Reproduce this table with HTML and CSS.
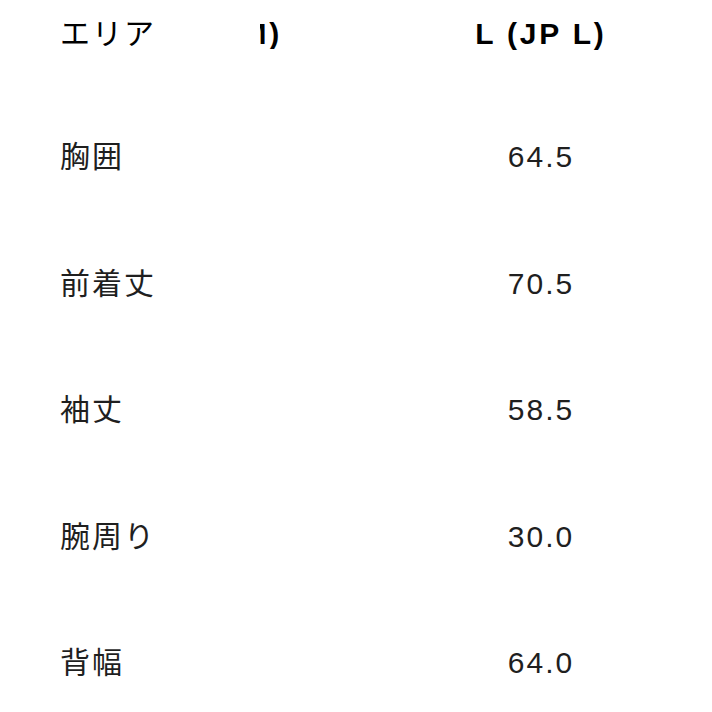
FILE: index.html
```html
<!DOCTYPE html>
<html lang="ja">
<head>
<meta charset="utf-8">
<title>サイズ表</title>
<link rel="stylesheet" href="styles.css">
</head>
<body>
<div class="table">
  <div class="row head">
    <div class="cell area">エリア</div>
    <div class="cell clip"><span>M)</span></div>
    <div class="cell val">L (JP L)</div>
  </div>
  <div class="body">
    <div class="row"><div class="cell area">胸囲</div><div class="cell clip"></div><div class="cell val">64.5</div></div>
    <div class="row"><div class="cell area">前着丈</div><div class="cell clip"></div><div class="cell val">70.5</div></div>
    <div class="row"><div class="cell area">袖丈</div><div class="cell clip"></div><div class="cell val">58.5</div></div>
    <div class="row"><div class="cell area">腕周り</div><div class="cell clip"></div><div class="cell val">30.0</div></div>
    <div class="row"><div class="cell area">背幅</div><div class="cell clip"></div><div class="cell val">64.0</div></div>
  </div>
</div>
</body>
</html>
```
FILE: styles.css
```css
html, body {
  margin: 0;
  padding: 0;
  background: #ffffff;
  overflow: hidden;
}
body {
  width: 712px;
  height: 712px;
  font-family: "Liberation Sans", "Noto Sans CJK JP", sans-serif;
  color: #1f1f1f;
}
.table {
  display: flex;
  flex-direction: column;
  padding-left: 60px;
}
.row {
  display: flex;
  align-items: center;
  height: 126.5px;
  font-size: 30px;
  line-height: 30px;
  letter-spacing: 2px;
}
.row.head {
  height: 68px;
  color: #000;
}
.row.head .clip,
.row.head .val {
  font-weight: bold;
  letter-spacing: 2.8px;
}
.body {
  display: flex;
  flex-direction: column;
  margin-top: 26px;
}
.cell {
  white-space: nowrap;
}
.area {
  width: 200px;
  flex: none;
}
.clip {
  width: 22px;
  flex: none;
  overflow: hidden;
  display: flex;
  justify-content: flex-end;
}
.val {
  flex: 1;
  padding-left: 88px;
  text-align: center;
}
```
